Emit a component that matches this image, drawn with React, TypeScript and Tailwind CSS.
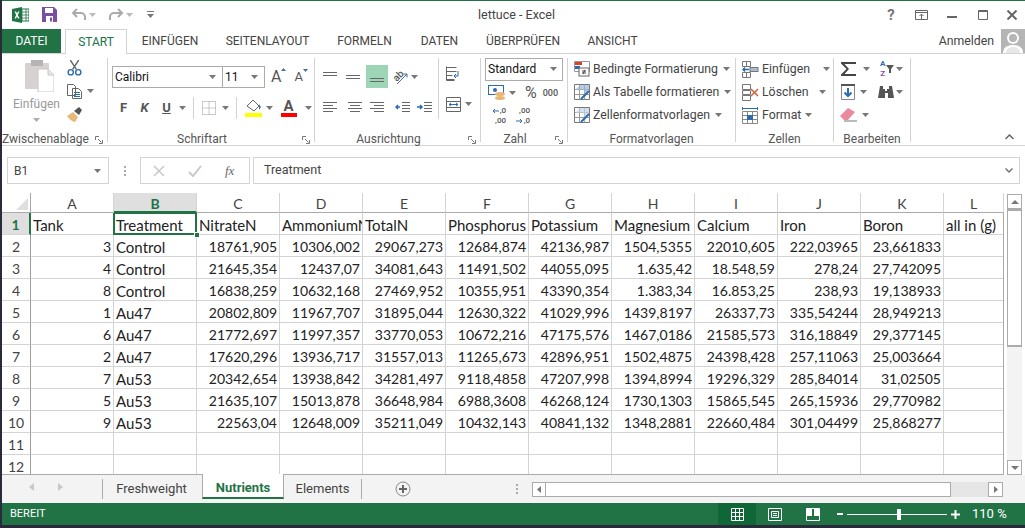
import type { ReactNode } from "react";

const columns = ["A", "B", "C", "D", "E", "F", "G", "H", "I", "J", "K", "L"];
const headers = ["Tank", "Treatment", "NitrateN", "AmmoniumN", "TotalN", "Phosphorus", "Potassium", "Magnesium", "Calcium", "Iron", "Boron", "all in (g)"];
const rows = [
  ["3", "Control", "18761,905", "10306,002", "29067,273", "12684,874", "42136,987", "1504,5355", "22010,605", "222,03965", "23,661833"],
  ["4", "Control", "21645,354", "12437,07", "34081,643", "11491,502", "44055,095", "1.635,42", "18.548,59", "278,24", "27,742095"],
  ["8", "Control", "16838,259", "10632,168", "27469,952", "10355,951", "43390,354", "1.383,34", "16.853,25", "238,93", "19,138933"],
  ["1", "Au47", "20802,809", "11967,707", "31895,044", "12630,322", "41029,996", "1439,8197", "26337,73", "335,54244", "28,949213"],
  ["6", "Au47", "21772,697", "11997,357", "33770,053", "10672,216", "47175,576", "1467,0186", "21585,573", "316,18849", "29,377145"],
  ["2", "Au47", "17620,296", "13936,717", "31557,013", "11265,673", "42896,951", "1502,4875", "24398,428", "257,11063", "25,003664"],
  ["7", "Au53", "20342,654", "13938,842", "34281,497", "9118,4858", "47207,998", "1394,8994", "19296,329", "285,84014", "31,02505"],
  ["5", "Au53", "21635,107", "15013,878", "36648,984", "6988,3608", "46268,124", "1730,1303", "15865,545", "265,15936", "29,770982"],
  ["9", "Au53", "22563,04", "12648,009", "35211,049", "10432,143", "40841,132", "1348,2881", "22660,484", "301,04499", "25,868277"],
];

function Caret({ className = "" }: { className?: string }) {
  return (
    <svg width="7" height="4" viewBox="0 0 7 4" className={`shrink-0 ${className}`}>
      <path d="M0 0h7L3.5 4z" fill="#777" />
    </svg>
  );
}

function Launcher() {
  return (
    <svg width="8" height="8" viewBox="0 0 8 8" className="absolute right-[4px] bottom-[-2px]" fill="none" stroke="#777">
      <path d="M.5 4V.5H4M3 3l3.500 3.500M7.500 4v3.500H4" />
    </svg>
  );
}

function Group({ width, label, launcher, children }: { width: string; label: string; launcher?: boolean; children: ReactNode }) {
  return (
    <div className={`relative flex h-[84px] shrink-0 flex-col border-r border-[#d4d4d4] ${width}`}>
      <div className="h-[72px]">{children}</div>
      <div className={`h-[12px] whitespace-nowrap text-center text-[12px] leading-[18px] text-[#555] ${launcher ? "pr-[18px]" : ""}`}>{label}</div>
      {launcher && <Launcher />}
    </div>
  );
}

function Lines({ d, className = "" }: { d: string; className?: string }) {
  return (
    <svg width="15" height="15" viewBox="0 0 15 15" fill="none" stroke="#666" className={`shrink-0 ${className}`}>
      <path d={d} />
    </svg>
  );
}

function GridIcon({ children }: { children: ReactNode }) {
  return (
    <svg width="17" height="17" viewBox="0 0 17 17" fill="none" className="shrink-0">
      {children}
    </svg>
  );
}

function StyleRow({ icon, text }: { icon: ReactNode; text: string }) {
  return (
    <div className="flex h-[23px] items-center gap-[3px] pl-[6px]">
      {icon}
      <span className="whitespace-nowrap text-[12.3px] text-[#444]">{text}</span>
      <Caret className="ml-[2px]" />
    </div>
  );
}

function CellRow({ icon, text, caretClass }: { icon: ReactNode; text: string; caretClass: string }) {
  return (
    <div className="flex h-[23px] items-center gap-[3px] pl-[6px]">
      {icon}
      <span className="whitespace-nowrap text-[12.3px] text-[#444]">{text}</span>
      <Caret className={caretClass} />
    </div>
  );
}

function TitleBar() {
  return (
    <div className="flex h-[28px] items-center">
      <svg width="17" height="16" viewBox="0 0 17 16" className="ml-[10px]">
        <rect x="7" y="2" width="10" height="12" fill="#fff" stroke="#217346" />
        <path d="M10 2v12M14 2v12M7 5h10M7 8h10M7 11h10" stroke="#217346" strokeWidth=".8" />
        <path d="M0 2l10-2v16L0 14z" fill="#217346" />
        <path d="M2.500 4.500h1.600L5 6.500l1-2h1.500L5.800 8l1.800 3.500H6L5 9.400 4 11.500H2.500L4.200 8z" fill="#fff" />
      </svg>
      <svg width="15" height="15" viewBox="0 0 15 15" className="ml-[13px]">
        <path d="M0 0h12l3 3v12H0z" fill="#7a4fa3" />
        <rect x="3" y="1" width="8" height="5" fill="#fff" />
        <rect x="4" y="9" width="7" height="6" fill="#fff" />
        <rect x="8" y="10.500" width="2" height="4" fill="#7a4fa3" />
      </svg>
      <svg width="16" height="13" viewBox="0 0 16 13" fill="none" className="ml-[14px]">
        <path d="M6 1L2 5l4 4M2 5h8a4 4 0 0 1 4 4v3" stroke="#aaa" strokeWidth="2" />
      </svg>
      <Caret className="ml-[2px] opacity-50" />
      <svg width="16" height="13" viewBox="0 0 16 13" fill="none" className="ml-[12px]">
        <path d="M10 1l4 4-4 4M14 5H6a4 4 0 0 0-4 4v3" stroke="#aaa" strokeWidth="2" />
      </svg>
      <Caret className="ml-[2px] opacity-50" />
      <svg width="7" height="7" viewBox="0 0 7 7" className="ml-[14px]">
        <path d="M0 0h7v1H0zM0 3h7L3.500 7z" fill="#777" />
      </svg>
      <div className="flex-1 pr-[2px] text-center text-[12.5px] text-[#444]">lettuce - Excel</div>
      <div className="mr-[3px] flex items-center">
        <span className="w-[20px] text-center text-[15px] font-bold text-[#777]">?</span>
        <svg width="13" height="10" viewBox="0 0 13 10" fill="none" stroke="#666" className="ml-[14px]">
          <path d="M.5.500h12v9H.5zM.5 2.500h12M6.500 9V4.500M4.500 6l2-2 2 2" />
        </svg>
        <svg width="10" height="2" viewBox="0 0 10 2" className="ml-[19px] mt-[4px]">
          <rect width="10" height="2" fill="#666" />
        </svg>
        <svg width="10" height="10" viewBox="0 0 10 10" fill="none" stroke="#666" className="ml-[21px]">
          <path d="M.5.500h9v9h-9zM0 1.500h10" />
        </svg>
        <svg width="10" height="10" viewBox="0 0 10 10" fill="none" stroke="#666" strokeWidth="2" className="ml-[19px] mr-[5px]">
          <path d="M.5.500l9 9M9.500.500l-9 9" />
        </svg>
      </div>
    </div>
  );
}

function MenuTabs() {
  const items = [
    { name: "EINFÜGEN", w: "w-[84px]" },
    { name: "SEITENLAYOUT", w: "w-[111px]" },
    { name: "FORMELN", w: "w-[83px]" },
    { name: "DATEN", w: "w-[67px]" },
    { name: "ÜBERPRÜFEN", w: "w-[100px]" },
    { name: "ANSICHT", w: "w-[79px]" },
  ];
  return (
    <div className="flex h-[25px] items-stretch border-b border-[#d4d4d4]">
      <div className="flex h-[24px] w-[59px] items-center justify-center bg-[#217346] text-[12px] text-white">DATEI</div>
      <div className="z-10 ml-[4px] flex h-[25px] w-[62px] items-center justify-center border-x border-t border-[#d4d4d4] bg-white text-[12px] text-[#217346]">START</div>
      <div className="ml-[1px] flex">
        {items.map((t) => (
          <div key={t.name} className={`flex items-center justify-center whitespace-nowrap text-[12px] text-[#444] ${t.w}`}>{t.name}</div>
        ))}
      </div>
      <div className="flex-1" />
      <span className="self-center pr-[7px] text-[12.3px] text-[#444]">Anmelden</span>
      <div className="h-[24px] w-[24px] overflow-hidden bg-[#b5b5b5]">
        <svg width="24" height="24" viewBox="0 0 24 24">
          <circle cx="12" cy="9" r="6" fill="#fff" />
          <path d="M2 24c0-6 5-8 10-8s10 2 10 8z" fill="#fff" />
          <circle cx="12" cy="9" r="4" fill="#b5b5b5" />
          <path d="M5 24c0-4 3-6 7-6s7 2 7 6z" fill="#e8e8e8" />
        </svg>
      </div>
    </div>
  );
}

function ClipboardGroup() {
  return (
    <Group width="w-[106px]" label="Zwischenablage" launcher>
      <div className="flex h-full">
        <div className="flex w-[65px] flex-col items-center pl-[4px] pt-[2px]">
          <svg width="29" height="32" viewBox="0 0 29 32" className="ml-[6px]">
            <rect x="0" y="3" width="24" height="26" rx="1" fill="#d6d2d2" />
            <rect x="6" y="0" width="12" height="6" fill="#b8b3b3" />
            <path d="M13 9h10l6 6v17H13z" fill="#fff" stroke="#c6c6c6" />
            <path d="M23 9v6h6" fill="#e6e6e6" stroke="#c6c6c6" />
          </svg>
          <span className="mt-[3px] text-[12px] leading-[18px] text-[#999]">Einfügen</span>
          <Caret className="mt-[5px] opacity-60" />
        </div>
        <div className="flex flex-col items-start pt-[2px]">
          <svg width="15" height="16" viewBox="0 0 15 17" fill="none">
            <path d="M3 0l6.500 10M12 0L5.500 10" stroke="#666" strokeWidth="1.500" />
            <circle cx="3.500" cy="13" r="2.800" stroke="#2b6cb0" strokeWidth="1.500" />
            <circle cx="11.500" cy="13" r="2.800" stroke="#2b6cb0" strokeWidth="1.500" />
          </svg>
          <div className="mt-[8px] flex items-center gap-[5px]">
            <svg width="15" height="15" viewBox="0 0 15 15" fill="none" stroke="#666">
              <path d="M.5.500h6l2 2v9h-8zM5.500 4.500h6l3 3v7h-9z" fill="#fff" />
              <path d="M7 8.500h6M7 10.500h6M7 12.500h6" stroke="#2b6cb0" />
            </svg>
            <Caret />
          </div>
          <svg width="16" height="15" viewBox="0 0 16 15" className="mt-[8px]">
            <path d="M0 9l6-4 5 5-3 5C6 15 2 12 0 9z" fill="#e8b878" />
            <path d="M7 4l5-4 3 3-3 5z" fill="#555" />
          </svg>
        </div>
      </div>
    </Group>
  );
}

function FontGroup() {
  return (
    <Group width="w-[207px]" label="Schriftart" launcher>
      <div className="flex h-[30px] items-center pl-[4px] pt-[8px]">
        <div className="flex h-[22px] w-[111px] items-center justify-between border border-[#ababab] bg-white pl-[2px] pr-[6px] text-[12px] text-[#111]">
          <span>Calibri</span>
          <Caret />
        </div>
        <div className="-ml-px flex h-[22px] w-[43px] items-center justify-between border border-[#ababab] bg-white pl-[2px] pr-[6px] text-[12px] text-[#111]">
          <span>11</span>
          <Caret />
        </div>
        <div className="ml-[6px] flex items-start text-[16px] leading-[18px] text-[#555]">
          A
          <svg width="5" height="3" viewBox="0 0 5 3"><path d="M0 3h5L2.500 0z" fill="#41719c" /></svg>
        </div>
        <div className="ml-[8px] flex items-start text-[13px] leading-[16px] text-[#555]">
          A
          <svg width="5" height="3" viewBox="0 0 5 3"><path d="M0 0h5L2.500 3z" fill="#41719c" /></svg>
        </div>
      </div>
      <div className="mt-[8px] flex h-[24px] items-center pl-[8px] text-[13px] text-[#555]">
        <span className="w-[15px] text-center font-bold">F</span>
        <span className="ml-[6px] w-[15px] text-center font-bold italic">K</span>
        <span className="ml-[7px] w-[15px] text-center font-bold underline">U</span>
        <Caret className="ml-[5px]" />
        <div className="ml-[7px] mr-[7px] h-[22px] w-px bg-[#d4d4d4]" />
        <svg width="14" height="14" viewBox="0 0 14 14" fill="none" stroke="#999" strokeDasharray="1 1" className="ml-[1px]">
          <path d="M.5.500h13v13H.5zM7 .5v13M.5 7h13" />
        </svg>
        <Caret className="ml-[6px]" />
        <div className="ml-[7px] mr-[8px] h-[22px] w-px bg-[#d4d4d4]" />
        <svg width="17" height="18" viewBox="0 0 17 18">
          <path d="M2 7l6-6 6 6-5 5z" fill="#fff" stroke="#666" />
          <path d="M14 5l2 3-2 3z" fill="#41719c" />
          <rect y="14" width="17" height="4" fill="#ffff00" />
        </svg>
        <Caret className="ml-[4px]" />
        <div className="ml-[7px] flex w-[17px] flex-col items-center">
          <span className="text-[15px] font-bold leading-[14px]">A</span>
          <div className="h-[4px] w-[16px] bg-[#ff0000]" />
        </div>
        <Caret className="ml-[8px]" />
      </div>
    </Group>
  );
}

function AlignGroup() {
  return (
    <Group width="w-[166px]" label="Ausrichtung" launcher>
      <div className="flex">
        <div className="flex flex-col">
          <div className="flex h-[30px] items-end pl-[8px]">
            <div className="flex h-[23px] w-[15px] items-center"><Lines d="M0 3.500h14M0 6.500h14" /></div>
            <div className="ml-[8px] flex h-[23px] w-[17px] items-center"><Lines d="M0 6.500h14M0 9.500h14" /></div>
            <div className="ml-[3px] flex h-[23px] w-[22px] items-center justify-center bg-[#9fd5b7]"><Lines d="M0 9.500h14M0 12.500h14" /></div>
            <div className="relative mb-[2px] ml-[4px] h-[18px] w-[18px]">
              <span className="absolute left-[1px] top-[1px] -rotate-45 text-[10px] font-medium leading-[14px] text-[#555]">ab</span>
              <svg width="18" height="18" viewBox="0 0 18 18" fill="none" className="absolute left-0 top-0">
                <path d="M5 16L15 6M11.500 6H15v3.500" stroke="#41719c" />
              </svg>
            </div>
            <Caret className="mb-[9px] ml-[1px]" />
          </div>
          <div className="mt-[9px] flex h-[22px] items-center pl-[8px]">
            <Lines d="M0 2.500h14M0 5.500h10M0 8.500h14M0 11.500h10" />
            <Lines className="ml-[10px]" d="M0 2.500h14M2 5.500h10M0 8.500h14M2 11.500h10" />
            <Lines className="ml-[7px]" d="M0 2.500h14M4 5.500h10M0 8.500h14M4 11.500h10" />
            <svg width="15" height="15" viewBox="0 0 15 15" fill="none" className="ml-[10px]">
              <path d="M7 2.500h8M7 5.500h8M7 8.500h8M7 11.500h8" stroke="#666" />
              <path d="M5 7H1M3 5L1 7l2 2" stroke="#2b6cb0" strokeWidth="1.500" />
            </svg>
            <svg width="15" height="15" viewBox="0 0 15 15" fill="none" className="ml-[7px]">
              <path d="M7 2.500h8M7 5.500h8M7 8.500h8M7 11.500h8" stroke="#666" />
              <path d="M0 7h5M3 5l2 2-2 2" stroke="#2b6cb0" strokeWidth="1.500" />
            </svg>
          </div>
        </div>
        <div className="ml-[6px] flex flex-col items-start border-l border-[#d4d4d4] pl-[7px] pt-[6px]">
          <svg width="16" height="16" viewBox="0 0 16 16" fill="none" stroke="#666" className="mt-[2px]">
            <path d="M.5 1.500h10M.5 5.500h10M.5 9.500h6M.5 13.500h8M.5.500v14h8" />
            <path d="M12 5v5H8M10 8l-2 2 2 2" stroke="#2b6cb0" />
          </svg>
          <div className="mt-[15px] flex items-center gap-[4px]">
            <svg width="15" height="15" viewBox="0 0 15 15" fill="none" stroke="#666">
              <path d="M.5.500h14v14H.5zM.5 4.500h14M.5 10.500h14" />
              <path d="M3 7.500h9M3 7.500l2-1.500M3 7.500l2 1.500M12 7.500L10 6M12 7.500L10 9" stroke="#2b6cb0" />
            </svg>
            <Caret />
          </div>
        </div>
      </div>
    </Group>
  );
}

function NumberGroup() {
  return (
    <Group width="w-[87px]" label="Zahl" launcher>
      <div className="pl-[4px]">
        <div className="flex h-[23px] w-[78px] items-center justify-between border border-[#ababab] bg-white pl-[2px] pr-[5px] text-[12px] text-[#111]">
          <span>Standard</span>
          <Caret />
        </div>
        <div className="mt-[1px] flex h-[23px] items-center pl-[3px]">
          <svg width="18" height="16" viewBox="0 0 18 16">
            <rect x=".5" y=".5" width="15" height="9" fill="#fff" stroke="#2b6cb0" />
            <circle cx="7" cy="5" r="2" fill="#2b6cb0" />
            <ellipse cx="12" cy="9" rx="5" ry="2" fill="#e8b878" />
            <ellipse cx="12" cy="13" rx="5" ry="2" fill="#e8b878" />
          </svg>
          <Caret className="ml-[3px]" />
          <span className="ml-[9px] text-[16px] leading-[16px] text-[#555]">%</span>
          <span className="ml-[6px] text-[9px] font-medium text-[#555]">000</span>
        </div>
        <div className="flex h-[23px] items-center pl-[3px] text-[8px] font-medium leading-[10px] text-[#555]">
          <div className="flex w-[18px] flex-col items-end">
            <div className="flex items-center gap-px">
              <svg width="7" height="6" viewBox="0 0 7 6" fill="none" stroke="#2b6cb0"><path d="M7 3H1M3 1L1 3l2 2" /></svg>
              <span>,0</span>
            </div>
            <span>,00</span>
          </div>
          <div className="ml-[6px] flex w-[18px] flex-col items-end">
            <span>,00</span>
            <div className="flex items-center gap-px">
              <svg width="7" height="6" viewBox="0 0 7 6" fill="none" stroke="#2b6cb0"><path d="M0 3h6M4 1l2 2-2 2" /></svg>
              <span>,0</span>
            </div>
          </div>
        </div>
      </div>
    </Group>
  );
}

function TableIcon({ fill }: { fill: string }) {
  return (
    <svg width="16" height="16" viewBox="0 0 16 16" fill="none" className="shrink-0">
      <path d="M.5.500h15v15H.5z" fill="#fff" stroke="#777" />
      <path d="M.5 5.500h15M.5 10.500h15M5.500.5v15M10.500.5v15" stroke="#999" />
      <path d="M1 6h9v9l5-9V1H6z" fill={fill} opacity=".7" />
      <path d="M7 15l8-8" stroke="#2b6cb0" strokeWidth="2" />
    </svg>
  );
}

function StylesGroup() {
  return (
    <Group width="w-[168px]" label="Formatvorlagen">
      <StyleRow
        text="Bedingte Formatierung"
        icon={
          <svg width="16" height="16" viewBox="0 0 16 16" className="shrink-0" fill="none">
            <path d="M.5.500h15v10H.5z" fill="#fff" stroke="#999" />
            <rect x="1" y="1" width="7" height="3" fill="#d24726" />
            <rect x="1" y="5" width="5" height="3" fill="#2b6cb0" />
            <rect x="5" y="7" width="10" height="8" fill="#fff" stroke="#666" />
            <path d="M8 10h4M8 12h4M11 9l-2 4" stroke="#444" />
          </svg>
        }
      />
      <StyleRow text="Als Tabelle formatieren" icon={<TableIcon fill="#9db7d8" />} />
      <StyleRow text="Zellenformatvorlagen" icon={<TableIcon fill="#c4d3e8" />} />
    </Group>
  );
}

function CellsGroup() {
  return (
    <Group width="w-[98px]" label="Zellen">
      <CellRow
        text="Einfügen"
        caretClass="ml-[10px]"
        icon={
          <GridIcon>
            <path d="M.5.500h8v5h-8zM.5 11.500h8v5h-8zM4.500.5v5M4.500 11.500v5" stroke="#777" />
            <rect x="8" y="6.500" width="8" height="4" fill="#a9bcd4" stroke="#777" />
            <path d="M7 8.500H1M3 6.500l-2 2 2 2" stroke="#2b6cb0" strokeWidth="1.500" />
          </GridIcon>
        }
      />
      <CellRow
        text="Löschen"
        caretClass="ml-[7px]"
        icon={
          <GridIcon>
            <path d="M.5.500h8v5h-8zM.5 11.500h8v5h-8zM.5 6.500h8v4h-8z" stroke="#777" />
            <path d="M9 5l7 7M16 5l-7 7" stroke="#d2603a" strokeWidth="1.500" />
          </GridIcon>
        }
      />
      <CellRow
        text="Format"
        caretClass="ml-[1px]"
        icon={
          <GridIcon>
            <path d="M.5 1.500h15M.5 0v3M15.500 0v3" stroke="#2b6cb0" />
            <path d="M.5 4.500h15v12H.5zM.5 8.500h15M.5 12.500h15M5.500 4.500v12M10.500 4.500v12" stroke="#888" />
            <rect x="5" y="8" width="6" height="5" fill="#2b6cb0" />
          </GridIcon>
        }
      />
    </Group>
  );
}

function EditGroup() {
  return (
    <Group width="w-[77px]" label="Bearbeiten">
      <div className="flex h-[23px] items-center pl-[6px]">
        <svg width="17" height="16" viewBox="0 0 17 16">
          <path d="M1 1h15v2H4.500L9 8l-4.500 5H16v2H1v-1.500L6.500 8 1 2.500z" fill="#444" />
        </svg>
        <Caret className="ml-[6px]" />
        <div className="ml-[10px] flex flex-col items-center text-[8px] font-bold leading-[10px]">
          <span className="text-[#2b6cb0]">A</span>
          <span className="text-[#7a4fa3]">Z</span>
        </div>
        <svg width="8" height="8" viewBox="0 0 8 8" className="ml-[1px]"><path d="M0 0h8L5 4v4H3V4z" fill="#555" /></svg>
        <Caret className="ml-[2px]" />
      </div>
      <div className="flex h-[23px] items-center pl-[7px]">
        <svg width="14" height="16" viewBox="0 0 14 16" fill="none">
          <path d="M.5.500h13v15H.5z" fill="#fff" stroke="#888" />
          <rect y="0" width="14" height="2" fill="#555" />
          <path d="M7 4v8M3.500 8.500L7 12l3.500-3.500" stroke="#2b6cb0" strokeWidth="2" />
        </svg>
        <Caret className="ml-[5px]" />
        <svg width="16" height="13" viewBox="0 0 16 13" className="ml-[11px]">
          <path d="M2 0h3v3h2v2h2V3h2V0h3l2 12h-6V7H7v5H0z" fill="#555" />
        </svg>
        <Caret className="ml-[2px]" />
      </div>
      <div className="flex h-[23px] items-center pl-[6px]">
        <svg width="17" height="14" viewBox="0 0 17 14">
          <path d="M0 8l8-8 7 4-7 8H4z" fill="#ea8a9c" />
          <path d="M4 13h13" stroke="#777" />
        </svg>
        <Caret className="ml-[5px]" />
      </div>
    </Group>
  );
}

function Ribbon() {
  return (
    <div className="relative h-[93px] border-b border-[#d4d4d4]">
      <div className="flex pt-[4px]">
        <ClipboardGroup />
        <FontGroup />
        <AlignGroup />
        <NumberGroup />
        <StylesGroup />
        <CellsGroup />
        <EditGroup />
      </div>
      <svg width="9" height="6" viewBox="0 0 9 6" fill="none" stroke="#666" strokeWidth="1.500" className="absolute bottom-[5px] right-[11px]">
        <path d="M.5 5l4-4 4 4" />
      </svg>
    </div>
  );
}

function FormulaBar() {
  return (
    <div className="mt-[11px] flex h-[27px] items-stretch pl-[5px] pr-[5px]">
      <div className="flex w-[102px] items-center justify-between border border-[#d4d4d4] pl-[6px] pr-[7px] text-[12px] text-[#444]">
        <span>B1</span>
        <Caret />
      </div>
      <div className="flex w-[31px] flex-col items-center justify-center gap-[2px]">
        <div className="h-[2px] w-[2px] bg-[#aaa]" />
        <div className="h-[2px] w-[2px] bg-[#aaa]" />
        <div className="h-[2px] w-[2px] bg-[#aaa]" />
      </div>
      <div className="flex w-[110px] items-center border border-[#d4d4d4] pl-[12px]">
        <svg width="12" height="12" viewBox="0 0 12 12" stroke="#c8c8c8" strokeWidth="1.500" fill="none"><path d="M1 1l10 10M11 1L1 11" /></svg>
        <svg width="14" height="12" viewBox="0 0 14 12" stroke="#c8c8c8" strokeWidth="2" fill="none" className="ml-[23px]"><path d="M1 7l4 4 8-10" /></svg>
        <span className="ml-[23px] font-['Liberation_Serif',serif] text-[13px] italic text-[#666]">fx</span>
      </div>
      <div className="ml-[3px] flex flex-1 items-center justify-between border border-[#d4d4d4] pl-[10px] pr-[6px] text-[12.5px] text-[#444]">
        <span>Treatment</span>
        <svg width="8" height="5" viewBox="0 0 8 5" fill="none" stroke="#777" strokeWidth="1.500"><path d="M.5.500L4 4 7.500.5" /></svg>
      </div>
    </div>
  );
}

const cell = "h-[22px] whitespace-nowrap border-r border-b border-[#d4d4d4] pl-[2px] pr-[2px] leading-[24px]";
const rowHead = "h-[22px] border-r border-b border-[#d4d4d4] border-r-[#9c9c9c] text-center leading-[24px] text-[#444]";

function RowCells({ index, row }: { index: number; row: string[] }) {
  return (
    <>
      <div className={rowHead}>{index}</div>
      {row.map((v, i) => (
        <div key={i} className={`overflow-hidden ${cell} ${i === 1 ? "text-left text-[15px]" : "text-right"}`}>{v}</div>
      ))}
      <div className={cell} />
    </>
  );
}

function Sheet() {
  return (
    <div className="mt-[9px] flex h-[282px] shrink-0">
      <div className="w-[1002px] font-['Lato',sans-serif] text-[14px] text-[#222]">
        <div className="grid h-[20px] grid-cols-[29px_repeat(10,83px)_83px_60px]">
          <div className="flex h-[20px] items-end justify-end border-r border-b border-[#ababab] bg-white pb-[2px] pr-[2px]">
            <svg width="12" height="12" viewBox="0 0 12 12"><path d="M12 0v12H0z" fill="#dfdfdf" /></svg>
          </div>
          {columns.map((c) =>
            c === "B" ? (
              <div key={c} className="h-[20px] border-r border-b-2 border-[#d4d4d4] border-b-[#217346] bg-[#dfdfdf] text-center font-bold leading-[22px] text-[#217346]">{c}</div>
            ) : (
              <div key={c} className="h-[20px] border-r border-b border-[#d4d4d4] border-b-[#ababab] text-center leading-[22px] text-[#444]">{c}</div>
            )
          )}
        </div>
        <div className="h-[262px] overflow-hidden border-r border-b border-[#ababab]">
          <div className="grid grid-cols-[29px_repeat(10,83px)_83px_60px]">
            <div className="h-[22px] border-r-2 border-b border-[#d4d4d4] border-r-[#217346] bg-[#dfdfdf] text-center font-bold leading-[24px] text-[#217346]">1</div>
            {headers.map((h, i) =>
              i === 1 ? (
                <div key={h} className={`relative text-[15px] ${cell}`}>
                  {h}
                  <div className="absolute -inset-px z-10 border-2 border-[#217346]" />
                  <div className="absolute bottom-[-4px] right-[-4px] z-20 h-[6px] w-[6px] border border-white bg-[#217346]" />
                </div>
              ) : (
                <div key={h} className={`overflow-hidden text-[15px] ${cell}`}>{h}</div>
              )
            )}
            {rows.map((r, ri) => (
              <RowCells key={ri} index={ri + 2} row={r} />
            ))}
            {[11, 12].map((n) => (
              <RowCells key={n} index={n} row={Array(11).fill("")} />
            ))}
          </div>
        </div>
      </div>
      <div className="ml-[3px] mt-px flex w-[15px] flex-col">
        <div className="flex h-[15px] items-center justify-center border border-[#ababab] bg-white">
          <svg width="8" height="4" viewBox="0 0 8 4"><path d="M0 4h8L4 0z" fill="#777" /></svg>
        </div>
        <div className="h-[138px] border-x border-y-2 border-[#ababab] border-b-[#ababab] bg-white" />
        <div className="flex-1 bg-[#f3f3f3]" />
        <div className="flex h-[15px] items-center justify-center border border-[#ababab] bg-white">
          <svg width="8" height="4" viewBox="0 0 8 4"><path d="M0 0h8L4 4z" fill="#777" /></svg>
        </div>
      </div>
    </div>
  );
}

function SheetTabs() {
  return (
    <div className="flex h-[28px] bg-[#f3f3f3]">
      <div className="flex h-[24px] w-[100px] items-center pl-[27px]">
        <svg width="5" height="8" viewBox="0 0 5 8"><path d="M5 0v8L0 4z" fill="#c8c8c8" /></svg>
        <svg width="5" height="8" viewBox="0 0 5 8" className="ml-[24px]"><path d="M0 0v8l5-4z" fill="#c8c8c8" /></svg>
      </div>
      <div className="mt-[4px] flex h-[20px] w-[100px] items-center justify-center border-l border-[#ababab] pr-[2px] text-[13px] text-[#444]">Freshweight</div>
      <div className="-mt-px flex h-[25px] w-[82px] items-center justify-center border-x border-[#ababab] border-b-2 border-b-[#217346] bg-white pt-[4px] text-[13px] font-bold text-[#217346]">Nutrients</div>
      <div className="mt-[4px] flex h-[20px] w-[78px] items-center justify-center border-r border-[#ababab] text-[13px] text-[#444]">Elements</div>
      <svg width="16" height="16" viewBox="0 0 16 16" fill="none" className="ml-[33px] mt-[6px]">
        <circle cx="8" cy="8" r="7" stroke="#888" />
        <path d="M8 4v8M4 8h8" stroke="#666" strokeWidth="2" />
      </svg>
      <div className="ml-[105px] mt-[6px] flex h-[16px] w-[2px] flex-col justify-center gap-[2px]">
        <div className="h-[2px] w-[2px] bg-[#aaa]" />
        <div className="h-[2px] w-[2px] bg-[#aaa]" />
        <div className="h-[2px] w-[2px] bg-[#aaa]" />
      </div>
      <div className="ml-[14px] mt-[7px] flex h-[15px] w-[471px]">
        <div className="flex w-[14px] items-center justify-center border border-[#ababab] bg-white">
          <svg width="4" height="7" viewBox="0 0 4 7"><path d="M4 0v7L0 3.500z" fill="#777" /></svg>
        </div>
        <div className="w-[405px] border-y border-r border-[#ababab] bg-white" />
        <div className="flex-1 bg-[#e6e6e6]" />
        <div className="flex w-[15px] items-center justify-center border border-[#ababab] bg-white">
          <svg width="4" height="7" viewBox="0 0 4 7"><path d="M0 0v7l4-3.500z" fill="#777" /></svg>
        </div>
      </div>
    </div>
  );
}

function StatusBar() {
  return (
    <div className="flex h-[22px] items-center bg-[#217346] text-[12px] text-white">
      <span className="ml-[8px] text-[11px]">BEREIT</span>
      <div className="flex-1" />
      <div className="flex h-[22px] w-[38px] items-center justify-center bg-[#0f6637]">
        <svg width="13" height="13" viewBox="0 0 13 13" fill="none" stroke="#fff"><path d="M.5.500h12v12H.5zM4.500.5v12M8.500.5v12M.5 4.500h12M.5 8.500h12" /></svg>
      </div>
      <svg width="14" height="13" viewBox="0 0 14 13" fill="none" stroke="#fff" className="ml-[12px]"><path d="M.5.500h13v12H.5zM3.500 3.500h7v6h-7zM5 5.500h4M5 7.500h4" /></svg>
      <svg width="14" height="13" viewBox="0 0 14 13" fill="none" stroke="#fff" className="ml-[24px]"><path d="M.5.500h13v12H.5z" /><path d="M1 1h5v7H1zM8 1h5v7H8z" fill="#fff" stroke="none" /></svg>
      <div className="ml-[17px] h-[2px] w-[6px] bg-white" />
      <div className="relative ml-[4px] h-px w-[100px] bg-white">
        <div className="absolute left-[50px] top-[-5px] h-[11px] w-[4px] bg-white" />
      </div>
      <svg width="9" height="9" viewBox="0 0 9 9" className="ml-[4px]"><path d="M3.500 0h2v3.500H9v2H5.500V9h-2V5.500H0v-2h3.500z" fill="#fff" /></svg>
      <span className="ml-[12px] mr-[20px] w-[33px] whitespace-nowrap text-[13px]">110 %</span>
    </div>
  );
}

export default function App() {
  return (
    <div className="h-[528px] w-[1025px] overflow-hidden bg-[#2a2a3a] pl-[2px] font-['Roboto',sans-serif]">
      <div className="flex h-[525px] flex-col border-t border-[#217346] bg-white">
        <TitleBar />
        <MenuTabs />
        <Ribbon />
        <FormulaBar />
        <Sheet />
        <SheetTabs />
        <StatusBar />
      </div>
    </div>
  );
}
